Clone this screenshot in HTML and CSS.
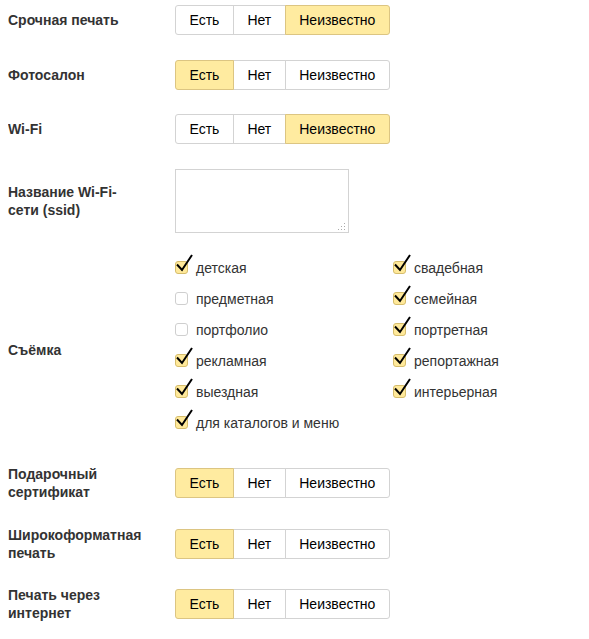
FILE: index.html
```html
<!DOCTYPE html>
<html lang="ru">
<head>
  <meta charset="UTF-8" />
  <meta name="viewport" content="width=device-width, initial-scale=1.0"/>
  <title>Карточка организации</title>
  <link rel="stylesheet" href="styles.css">
</head>
<body>
  <div class="form">
    <div class="field">
      <div class="field-label">Срочная печать</div>
      <div class="switch">
        <span class="switch-item">Есть</span>
        <span class="switch-item">Нет</span>
        <span class="switch-item switch-item-on">Неизвестно</span>
      </div>
    </div>

    <div class="field">
      <div class="field-label">Фотосалон</div>
      <div class="switch">
        <span class="switch-item switch-item-on">Есть</span>
        <span class="switch-item">Нет</span>
        <span class="switch-item">Неизвестно</span>
      </div>
    </div>

    <div class="field">
      <div class="field-label">Wi-Fi</div>
      <div class="switch">
        <span class="switch-item">Есть</span>
        <span class="switch-item">Нет</span>
        <span class="switch-item switch-item-on">Неизвестно</span>
      </div>
    </div>

    <div class="field field-ssid">
      <div class="field-label">Название Wi-Fi-сети (ssid)</div>
      <div class="textarea-wrap">
        <textarea class="textarea"></textarea>
        <svg class="grip" width="9" height="9" viewBox="0 0 9 9">
          <rect x="7" y="1" width="1" height="1"/>
          <rect x="4" y="4" width="1" height="1"/>
          <rect x="7" y="4" width="1" height="1"/>
          <rect x="1" y="7" width="1" height="1"/>
          <rect x="4" y="7" width="1" height="1"/>
          <rect x="7" y="7" width="1" height="1"/>
        </svg>
      </div>
    </div>

    <div class="field">
      <div class="field-label">Съёмка</div>
      <div class="checks">
        <div class="checks-col">
          <label class="check"><span class="box box-on"></span>детская</label>
          <label class="check"><span class="box"></span>предметная</label>
          <label class="check"><span class="box"></span>портфолио</label>
          <label class="check"><span class="box box-on"></span>рекламная</label>
          <label class="check"><span class="box box-on"></span>выездная</label>
          <label class="check"><span class="box box-on"></span>для каталогов и меню</label>
        </div>
        <div class="checks-col">
          <label class="check"><span class="box box-on"></span>свадебная</label>
          <label class="check"><span class="box box-on"></span>семейная</label>
          <label class="check"><span class="box box-on"></span>портретная</label>
          <label class="check"><span class="box box-on"></span>репортажная</label>
          <label class="check"><span class="box box-on"></span>интерьерная</label>
        </div>
      </div>
    </div>

    <div class="field">
      <div class="field-label">Подарочный сертификат</div>
      <div class="switch">
        <span class="switch-item switch-item-on">Есть</span>
        <span class="switch-item">Нет</span>
        <span class="switch-item">Неизвестно</span>
      </div>
    </div>

    <div class="field">
      <div class="field-label">Широкоформатная печать</div>
      <div class="switch">
        <span class="switch-item switch-item-on">Есть</span>
        <span class="switch-item">Нет</span>
        <span class="switch-item">Неизвестно</span>
      </div>
    </div>

    <div class="field">
      <div class="field-label">Печать через интернет</div>
      <div class="switch">
        <span class="switch-item switch-item-on">Есть</span>
        <span class="switch-item">Нет</span>
        <span class="switch-item">Неизвестно</span>
      </div>
    </div>
  </div>

  <script>
    // галочка рисуется поверх каждого отмеченного квадратика
    const tick = '<svg class="tick" width="20" height="20" viewBox="0 0 20 20">' +
      '<path d="M2 9.5 L7 15 L17 0" fill="none" stroke="#000" stroke-width="2"/></svg>';
    document.querySelectorAll(".box-on").forEach((b) => {
      b.innerHTML = tick;
    });
  </script>
</body>
</html>
```

FILE: styles.css
```css
body {
  margin: 5px 8px;
  font-family: "Liberation Sans", Arial, sans-serif;
  font-size: 14px;
  color: #000;
  background: #fff;
}
.field {
  display: grid;
  grid-template-columns: 167px auto;
  align-items: center;
  margin-bottom: 24.5px;
}
.field-ssid {
  margin-bottom: 26px;
}
.field-label {
  max-width: 138px;
  font-weight: bold;
  line-height: 18px;
  color: #333;
}
.switch {
  display: flex;
  justify-self: start;
}
.switch-item {
  position: relative;
  height: 28px;
  line-height: 28px;
  padding: 0 13.5px;
  border: 1px solid #d3d3d3;
  margin-left: -1px;
  background: #fff;
}
.switch-item:first-child {
  margin-left: 0;
  border-radius: 3px 0 0 3px;
}
.switch-item:last-child {
  border-radius: 0 3px 3px 0;
}
.switch-item-on {
  z-index: 1;
  background: #ffeba0;
  border-color: #dcc582;
}
.textarea-wrap {
  position: relative;
  justify-self: start;
}
.textarea {
  display: block;
  box-sizing: border-box;
  width: 174px;
  height: 64px;
  margin: 0;
  border: 1px solid #d3d3d3;
  resize: none;
}
.grip {
  position: absolute;
  right: 3px;
  bottom: 2px;
  fill: #aaa;
}
.checks {
  display: flex;
  padding-bottom: 9px;
}
.checks-col {
  display: flex;
  flex-direction: column;
  gap: 13px;
  width: 218px;
}
.check {
  display: flex;
  align-items: center;
  gap: 8px;
  line-height: 18px;
  color: #333;
}
.box {
  position: relative;
  box-sizing: border-box;
  width: 13px;
  height: 13px;
  border: 1px solid #cfcfcf;
  border-radius: 3px;
  background: #fff;
}
.box-on {
  background: #ffe99a;
  border-color: #d6bd6c;
}
.tick {
  position: absolute;
  left: -1px;
  top: -7px;
  overflow: visible;
}
```
